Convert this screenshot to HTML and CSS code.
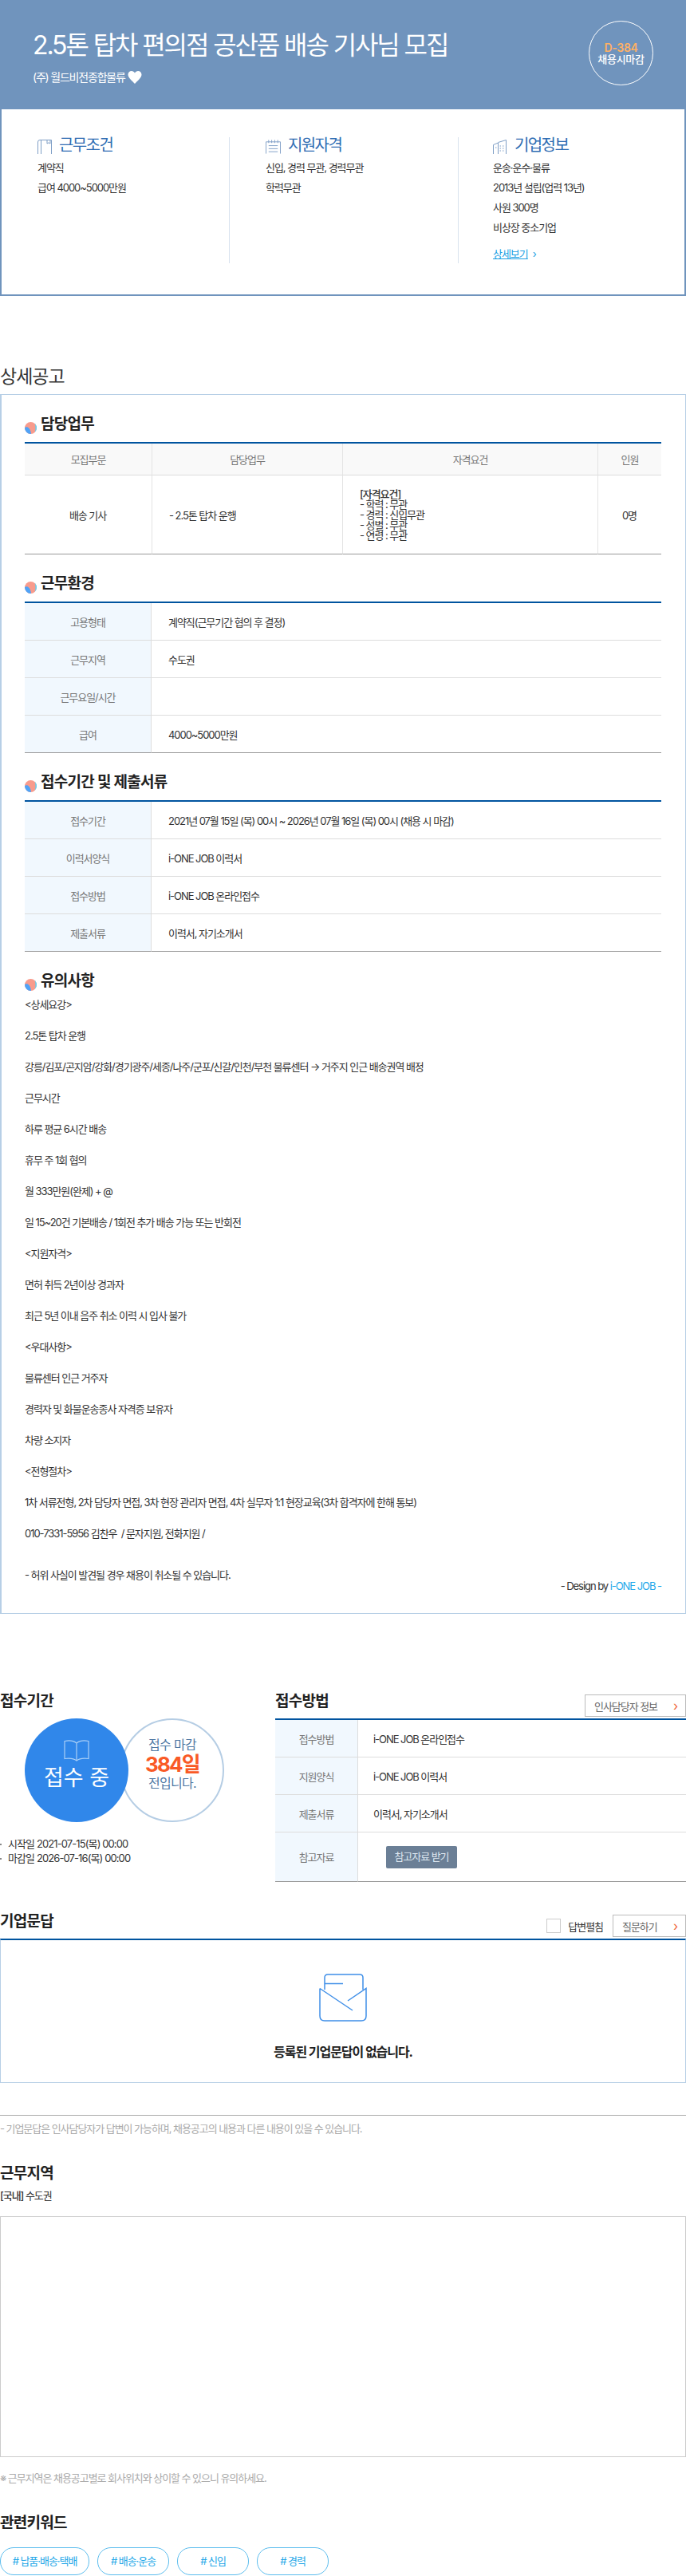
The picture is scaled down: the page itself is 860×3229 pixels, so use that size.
FILE: index.html
```html
<!DOCTYPE html>
<html lang="ko">
<head>
  <meta charset="UTF-8">
  <title>2.5톤 탑차 편의점 공산품 배송 기사님 모집</title>
  <link rel="stylesheet" href="styles.css">
</head>
<body>
  <!-- 상단 공고 제목 -->
  <header class="top-head">
    <div class="top-title">
      <h1>2.5톤 탑차 편의점 공산품 배송 기사님 모집</h1>
      <div class="company">
        <span>(주) 월드비전종합물류</span>
        <svg class="heart" width="18" height="16" viewBox="0 0 18 16"><path d="M9 16C6 12.5 0.5 8.500 0.500 4.500C0.500 1.800 2.500 0 4.900 0C6.600 0 8.200 0.900 9 2.500C9.800 0.900 11.400 0 13.100 0C15.500 0 17.500 1.800 17.500 4.500C17.500 8.500 12 12.500 9 16Z" fill="#fff"/></svg>
      </div>
    </div>
    <div class="dday">
      <strong>D-384</strong>
      <span>채용시마감</span>
    </div>
  </header>

  <section class="summary">
    <div class="sum-col">
      <h3>
        <svg width="18" height="18" viewBox="0 0 18 18" fill="none" stroke="#7f9fc6"><path d="M0.500 18V3Q0.500 0.500 3 0.500H17.500V18M4.500 18V0.500M12 0.500V5L14 3.800L16 5V0.500"/></svg>
        근무조건
      </h3>
      <p>계약직</p>
      <p>급여 4000~5000만원</p>
    </div>
    <div class="sum-col">
      <h3>
        <svg width="19" height="18" viewBox="0 0 20 18" fill="none" stroke="#7f9fc6"><path d="M0.500 18V2.500H19.500V18M4 0V4M8 0V4M12 0V4M16 0V4M4 7.500H16M4 11.500H16M4 15.500H16"/></svg>
        지원자격
      </h3>
      <p>신입, 경력 무관, 경력무관</p>
      <p>학력무관</p>
    </div>
    <div class="sum-col">
      <h3>
        <svg width="18" height="18" viewBox="0 0 18 18" fill="none" stroke="#7f9fc6"><path d="M0.500 18V6.500L6.500 4V18M6.500 3.500L16.500 0.500V18M3 10H4.500M8.500 8H10M12 8H13.500M8.500 11H10M12 11H13.500M8.500 14H10M12 14H13.500"/></svg>
        기업정보
      </h3>
      <p>운송·운수·물류</p>
      <p>2013년 설립(업력 13년)</p>
      <p>사원 300명</p>
      <p>비상장 중소기업</p>
      <a class="more" href="#"><u>상세보기</u><i>›</i></a>
    </div>
  </section>

  <h2 class="detail-title">상세공고</h2>
  <section class="detail">
    <h3 class="sec-title">
      <svg class="dot" width="15" height="15" viewBox="0 0 15 15"><use href="#dot-mark"/></svg>
      담당업무
    </h3>
    <table class="grid-table job-table">
      <colgroup><col class="c-part"><col class="c-task"><col class="c-req"><col></colgroup>
      <thead>
        <tr><th>모집부문</th><th>담당업무</th><th>자격요건</th><th>인원</th></tr>
      </thead>
      <tbody>
        <tr>
          <td class="center">배송 기사</td>
          <td>- 2.5톤 탑차 운행</td>
          <td class="req">
            <b>[자격요건]</b><br>
            - 학력 : 무관<br>
            - 경력 : 신입무관<br>
            - 성별 : 무관<br>
            - 연령 : 무관
          </td>
          <td class="center">0명</td>
        </tr>
      </tbody>
    </table>

    <h3 class="sec-title">
      <svg class="dot" width="15" height="15" viewBox="0 0 15 15"><use href="#dot-mark"/></svg>
      근무환경
    </h3>
    <table class="info-table">
      <tr><th>고용형태</th><td>계약직(근무기간 협의 후 결정)</td></tr>
      <tr><th>근무지역</th><td>수도권</td></tr>
      <tr><th>근무요일/시간</th><td></td></tr>
      <tr><th>급여</th><td>4000~5000만원</td></tr>
    </table>

    <h3 class="sec-title">
      <svg class="dot" width="15" height="15" viewBox="0 0 15 15"><use href="#dot-mark"/></svg>
      접수기간 및 제출서류
    </h3>
    <table class="info-table">
      <tr><th>접수기간</th><td>2021년 07월 15일 (목) 00시 ~ 2026년 07월 16일 (목) 00시 (채용 시 마감)</td></tr>
      <tr><th>이력서양식</th><td>i-ONE JOB 이력서</td></tr>
      <tr><th>접수방법</th><td>i-ONE JOB 온라인접수</td></tr>
      <tr><th>제출서류</th><td>이력서, 자기소개서</td></tr>
    </table>

    <h3 class="sec-title notice-title">
      <svg class="dot" width="15" height="15" viewBox="0 0 15 15"><use href="#dot-mark"/></svg>
      유의사항
    </h3>
    <div class="notice">
      <p>&lt;상세요강&gt;</p>
      <p>2.5톤 탑차 운행</p>
      <p>강릉/김포/곤지암/강화/경기광주/세종/나주/군포/신갈/인천/부천 물류센터 → 거주지 인근 배송권역 배정</p>
      <p>근무시간</p>
      <p>하루 평균 6시간 배송</p>
      <p>휴무 주 1회 협의</p>
      <p>월 333만원(완제) + @</p>
      <p>일 15~20건 기본배송 / 1회전 추가 배송 가능 또는 반회전</p>
      <p>&lt;지원자격&gt;</p>
      <p>면허 취득 2년이상 경과자</p>
      <p>최근 5년 이내 음주 취소 이력 시 입사 불가</p>
      <p>&lt;우대사항&gt;</p>
      <p>물류센터 인근 거주자</p>
      <p>경력자 및 화물운송종사 자격증 보유자</p>
      <p>차량 소지자</p>
      <p>&lt;전형절차&gt;</p>
      <p>1차 서류전형, 2차 담당자 면접, 3차 현장 관리자 면접, 4차 실무자 1:1 현장교육(3차 합격자에 한해 통보)</p>
      <p>010-7331-5956 김찬우 &nbsp;/ 문자지원, 전화지원 /</p>
      <p class="warn">- 허위 사실이 발견될 경우 채용이 취소될 수 있습니다.</p>
      <div class="design">- Design by <span>i-ONE JOB -</span></div>
    </div>
  </section>

  <section class="apply">
    <div class="apply-left">
      <div class="head-row"><h3 class="plain-title">접수기간</h3></div>
      <div class="circles">
        <div class="circle circle-on">
          <svg width="32" height="27" viewBox="0 0 32 27" fill="none" stroke="#a9cff6" stroke-width="1.200"><path d="M16 26C13 23.500 8 22.500 1 23.500V1.500C8 0.200 13 1.500 16 4C19 1.500 24 0.200 31 1.500V23.500C24 22.500 19 23.500 16 26ZM16 4V26"/></svg>
          <span>접수 중</span>
        </div>
        <div class="circle circle-off">
          <span>접수 마감</span>
          <strong>384일</strong>
          <span>전입니다.</span>
        </div>
      </div>
      <ul class="date-list">
        <li>시작일 2021-07-15(목) 00:00</li>
        <li>마감일 2026-07-16(목) 00:00</li>
      </ul>
    </div>
    <div class="apply-right">
      <div class="head-row">
        <h3 class="plain-title">접수방법</h3>
        <a class="line-btn hr-btn" href="#">인사담당자 정보<i>›</i></a>
      </div>
      <table class="info-table small-table">
        <tr><th>접수방법</th><td>i-ONE JOB 온라인접수</td></tr>
        <tr><th>지원양식</th><td>i-ONE JOB 이력서</td></tr>
        <tr><th>제출서류</th><td>이력서, 자기소개서</td></tr>
        <tr class="tall"><th>참고자료</th><td><a class="file-btn" href="#">참고자료 받기</a></td></tr>
      </table>
    </div>
  </section>

  <section class="qna">
    <div class="head-row qna-head">
      <h3 class="plain-title">기업문답</h3>
      <div class="qna-tools">
        <span class="check"></span>
        <span class="check-label">답변펼침</span>
        <a class="line-btn ask-btn" href="#">질문하기<i>›</i></a>
      </div>
    </div>
    <div class="qna-box">
      <svg width="60" height="60" viewBox="0 0 60 60" fill="none" stroke="#3f8fe8" stroke-width="1.500">
        <path d="M7 20V5Q7 1 11 1H51Q55 1 55 5V20M7 12.500H30"/>
        <path d="M1 18.500L42 46M36 34L59 18.500V53Q59 59 53 59H7Q1 59 1 53V18.500"/>
      </svg>
      <p>등록된 기업문답이 없습니다.</p>
    </div>
    <p class="qna-note">- 기업문답은 인사담당자가 답변이 가능하며, 채용공고의 내용과 다른 내용이 있을 수 있습니다.</p>
  </section>

  <section class="area">
    <h3 class="plain-title">근무지역</h3>
    <p class="area-name"><b>[국내]</b> 수도권</p>
    <div class="map-box"></div>
    <p class="area-note">※ 근무지역은 채용공고별로 회사위치와 상이할 수 있으니 유의하세요.</p>
  </section>

  <section class="keywords">
    <h3 class="plain-title">관련키워드</h3>
    <div class="chips">
      <a class="chip chip-wide" href="#"># 납품·배송·택배</a>
      <a class="chip" href="#"># 배송·운송</a>
      <a class="chip" href="#"># 신입</a>
      <a class="chip" href="#"># 경력</a>
    </div>
  </section>

  <!-- 제목 앞 동그라미 -->
  <svg class="defs" width="0" height="0">
    <defs>
      <clipPath id="dot-clip"><circle cx="7.500" cy="7.500" r="7.500"/></clipPath>
      <g id="dot-mark" clip-path="url(#dot-clip)">
        <rect width="15" height="15" fill="#f89b8c"/>
        <path d="M0 7C3 5 7 7 8 15H0Z" fill="#4fa3f7"/>
        <path d="M12 0H15V15H12C14 10 14 5 12 0Z" fill="#5ad4f7"/>
      </g>
    </defs>
  </svg>
</body>
</html>
```

FILE: styles.css
```css
/* Global */
body {
  margin: 0;
  font-family: Inter, "Noto Sans CJK KR", sans-serif;
  font-size: 13px;
  letter-spacing: -1.050px;
  color: #333;
  background-color: #fff;
}
h1, h2, h3, p, ul {
  margin: 0;
  padding: 0;
}
a {
  color: inherit;
  text-decoration: none;
}
i {
  font-style: normal;
}
.defs {
  position: absolute;
}

/* Top header */
.top-head {
  box-sizing: border-box;
  height: 137px;
  padding: 26px 41px 0;
  background-color: #7094bd;
  color: #fff;
  display: flex;
  justify-content: space-between;
  align-items: flex-start;
}
.top-title {
  padding-top: 1px;
}
.top-title h1 {
  font-size: 32px;
  line-height: 60px;
  font-weight: 400;
  letter-spacing: -2.100px;
}
.company {
  display: flex;
  align-items: center;
  gap: 3px;
  margin-top: -2px;
  font-size: 14px;
  line-height: 24px;
  letter-spacing: -1.200px;
}
.dday {
  box-sizing: border-box;
  width: 81px;
  height: 81px;
  border: 1.500px solid #fff;
  border-radius: 50%;
  display: flex;
  flex-direction: column;
  justify-content: center;
  align-items: center;
  font-size: 13px;
  line-height: 15px;
  font-weight: 500;
  letter-spacing: -0.300px;
}
.dday strong {
  color: #ffb163;
  font-size: 14px;
  font-weight: 600;
}

/* Summary */
.summary {
  box-sizing: border-box;
  height: 234px;
  padding-top: 35px;
  border: 2px solid #7094bd;
  border-top: 0;
  display: grid;
  grid-template-columns: 285px 287px 1fr;
}
.sum-col {
  box-sizing: border-box;
  height: 158px;
  padding-left: 45px;
  border-left: 1px solid #d8e2ee;
}
.sum-col:first-child {
  border-left: 0;
}
.sum-col:last-child {
  padding-left: 43px;
}
.sum-col h3 {
  display: flex;
  align-items: flex-end;
  gap: 9px;
  height: 22px;
  margin-top: -1px;
  margin-bottom: 5px;
  color: #2f6db3;
  font-size: 20px;
  line-height: 22px;
  font-weight: 400;
  letter-spacing: -1.600px;
}
.sum-col p {
  line-height: 25px;
}
.more {
  display: inline-block;
  margin-top: 10px;
  line-height: 20px;
  color: #1b9fe3;
}
.more i {
  margin-left: 6px;
}

/* Detail */
.detail-title {
  padding-top: 85px;
  margin-bottom: 6px;
  font-size: 23px;
  line-height: 32px;
  font-weight: 400;
  letter-spacing: -1px;
}
.detail {
  box-sizing: border-box;
  height: 1529px;
  padding: 0 30px 0 29px;
  border: 1px solid #b7cfe6;
  border-left-width: 2px;
}
.sec-title {
  display: flex;
  align-items: flex-end;
  gap: 5px;
  height: 28px;
  margin-top: 23px;
  margin-bottom: 8px;
  color: #222;
  font-size: 19px;
  line-height: 28px;
  font-weight: 700;
  letter-spacing: -0.700px;
}
.dot {
  margin-bottom: 2px;
}
.notice-title {
  margin-bottom: 5px;
}

/* Tables */
table {
  width: 100%;
  border-collapse: separate;
  border-spacing: 0;
  table-layout: fixed;
  border-top: 2px solid #00549f;
}
th, td {
  box-sizing: border-box;
  font-weight: 400;
}
.grid-table th {
  height: 40px;
  background-color: #f9f9f9;
  border-bottom: 1px solid #ddd;
  border-left: 1px solid #e4e4e4;
  color: #777;
}
.grid-table th:first-child {
  border-left: 0;
}
.grid-table td {
  height: 99px;
  padding-left: 21px;
  border-bottom: 1px solid #999;
  border-left: 1px solid #e4e4e4;
}
.grid-table td:first-child {
  border-left: 0;
}
.grid-table td.center {
  padding-left: 0;
  text-align: center;
}
.grid-table td.req {
  line-height: 13px;
}
.grid-table td.req b {
  font-weight: 500;
}
.c-part {
  width: 159px;
}
.c-task {
  width: 239px;
}
.c-req {
  width: 320px;
}
.info-table th {
  width: 159px;
  height: 47px;
  background-color: #f1f8fe;
  border-bottom: 1px solid #ddd;
  border-right: 1px solid #ddd;
  color: #777;
}
.info-table td {
  height: 47px;
  padding-left: 21px;
  border-bottom: 1px solid #ddd;
}
.info-table tr:last-child th,
.info-table tr:last-child td {
  border-bottom-color: #999;
}

/* Notice */
.notice p {
  margin-bottom: 19px;
  line-height: 20px;
}
.notice p.warn {
  margin-top: 32px;
  margin-bottom: -6px;
}
.design {
  line-height: 20px;
  text-align: right;
}
.design span {
  color: #1ea8ea;
}

/* Apply */
.apply {
  display: flex;
  padding-top: 96px;
}
.apply-left {
  width: 345px;
}
.apply-right {
  width: 515px;
}
.head-row {
  display: flex;
  justify-content: space-between;
  align-items: flex-end;
  height: 33px;
  margin-bottom: 2px;
}
.plain-title {
  align-self: flex-start;
  height: 28px;
  color: #222;
  font-size: 19px;
  line-height: 28px;
  font-weight: 700;
  letter-spacing: -0.700px;
}
.circles {
  display: flex;
  padding-left: 31px;
}
.circle {
  box-sizing: border-box;
  width: 130px;
  height: 130px;
  border-radius: 50%;
  display: flex;
  flex-direction: column;
  align-items: center;
}
.circle-on {
  position: relative;
  padding-top: 27px;
  background-color: #3087ea;
  color: #fff;
}
.circle-on span {
  margin-top: 3px;
  font-size: 27px;
  line-height: 36px;
  letter-spacing: 0;
}
.circle-off {
  margin-left: -10px;
  padding-top: 20px;
  border: 2px solid #b5cde4;
  color: #4d77a3;
  font-size: 16px;
  line-height: 23px;
  letter-spacing: -0.700px;
}
.circle-off strong {
  color: #f95a26;
  font-size: 26px;
  line-height: 25px;
  font-weight: 700;
  letter-spacing: -1.800px;
}
.date-list {
  margin-top: 18px;
  list-style: none;
  letter-spacing: -0.900px;
}
.date-list li {
  position: relative;
  padding-left: 10px;
  line-height: 18px;
}
.date-list li::before {
  content: "";
  position: absolute;
  left: 0;
  top: 9px;
  width: 2px;
  height: 2px;
  background-color: #888;
}
.line-btn {
  box-sizing: border-box;
  height: 28px;
  padding: 0 10px 0 11px;
  border: 1px solid #bbb;
  color: #666;
  display: flex;
  justify-content: space-between;
  align-items: center;
}
.line-btn i {
  color: #f0643c;
  font-size: 16px;
}
.hr-btn {
  width: 127px;
}
.ask-btn {
  width: 92px;
}
.small-table th {
  width: 104px;
}
.small-table td {
  padding-left: 19px;
}
.small-table .tall th,
.small-table .tall td {
  height: 62px;
}
.file-btn {
  display: block;
  width: 89px;
  height: 28px;
  margin-left: 16px;
  border-radius: 2px;
  background-color: #6b7f96;
  color: #dfe9f2;
  line-height: 27px;
  text-align: center;
}

/* QnA */
.qna {
  margin-top: 36px;
}
.qna-head {
  margin-bottom: 0;
  padding-bottom: 2px;
  box-sizing: content-box;
}
.qna-tools {
  display: flex;
  align-items: center;
}
.check {
  box-sizing: border-box;
  width: 18px;
  height: 18px;
  border: 1px solid #ccc;
}
.check-label {
  margin: 0 12px 0 9px;
}
.qna-box {
  box-sizing: border-box;
  height: 181px;
  padding-top: 42px;
  border: 1px solid #b7cfe6;
  border-top: 2px solid #00549f;
  text-align: center;
}
.qna-box svg {
  display: block;
  margin: 0 auto;
}
.qna-box p {
  margin-top: 27px;
  color: #222;
  font-size: 16px;
  line-height: 22px;
  font-weight: 700;
}
.qna-note {
  margin-top: 40px;
  padding-top: 6px;
  border-top: 1px solid #aaa;
  color: #aaa;
  line-height: 20px;
}

/* Area */
.area {
  margin-top: 33px;
}
.area-name {
  margin-top: 3px;
  line-height: 20px;
}
.area-name b {
  font-weight: 500;
}
.map-box {
  box-sizing: border-box;
  height: 302px;
  margin-top: 16px;
  border: 1px solid #ccc;
}
.area-note {
  margin-top: 16px;
  color: #aaa;
  line-height: 20px;
}

/* Keywords */
.keywords {
  margin-top: 33px;
}
.chips {
  display: flex;
  gap: 10px;
  margin-top: 16px;
  padding-bottom: 2px;
}
.chip {
  box-sizing: border-box;
  width: 90px;
  height: 35px;
  border: 1px solid #5cbdee;
  border-radius: 17px;
  color: #22a7e8;
  line-height: 33px;
  text-align: center;
}
.chip-wide {
  width: 112px;
}
```
